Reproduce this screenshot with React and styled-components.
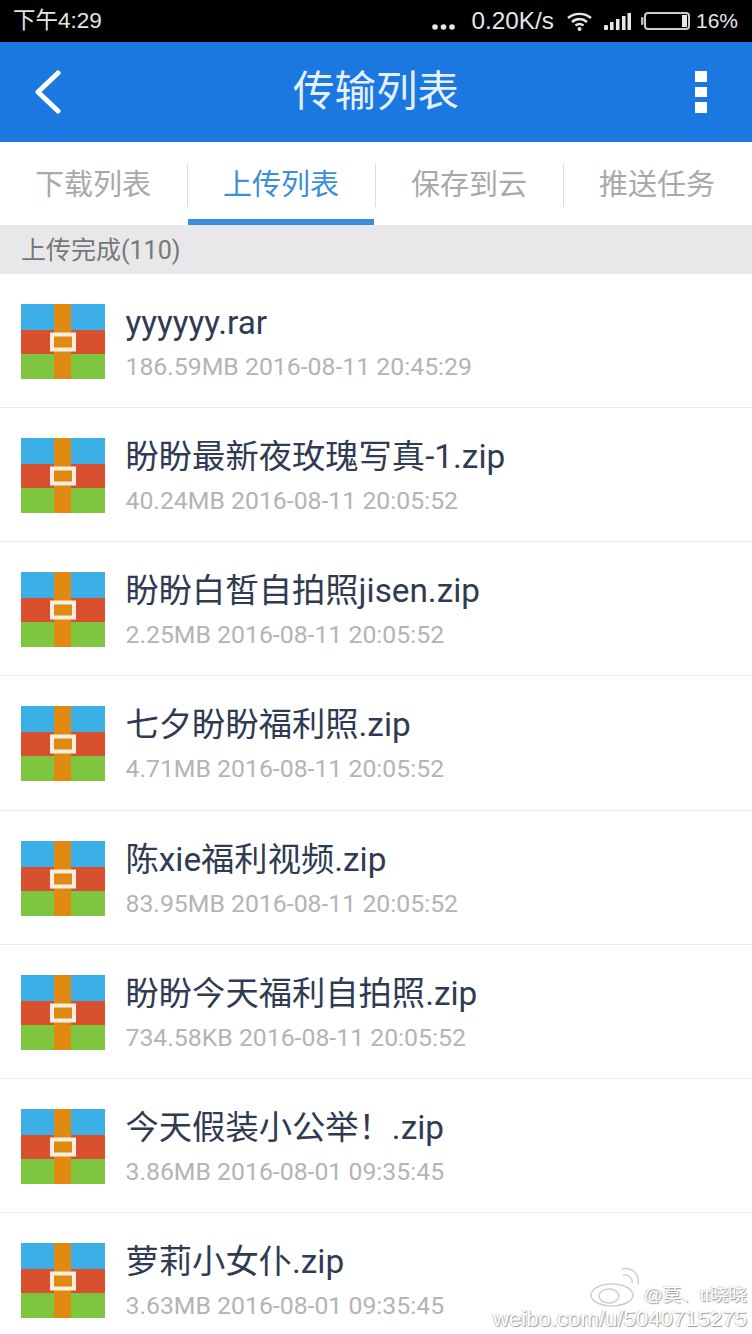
import React from 'react';
import styled, { createGlobalStyle } from 'styled-components';

const Global = createGlobalStyle`
  html, body { margin: 0; padding: 0; background: #fff; }
  * { box-sizing: border-box; }
`;

const FONT = `Roboto, "Noto Sans CJK SC", sans-serif`;

const Phone = styled.div`
  position: relative;
  width: 752px;
  height: 1334px;
  overflow: hidden;
  background: #fff;
  font-family: ${FONT};
`;

const StatusBar = styled.div`
  height: 42px;
  background: #000;
  color: #e6e6e6;
  display: flex;
  align-items: center;
  justify-content: space-between;
  padding: 0 14px 0 13px;
  font-family: "Liberation Sans", "Noto Sans CJK SC", sans-serif;
  font-size: 21px;
`;

const Clock = styled.span`
  font-size: 22.5px;
  line-height: 26px;
  margin-top: -1px;
`;

const StatusRight = styled.div`
  display: flex;
  align-items: center;
`;

const Speed = styled.span`
  margin: 0 13px 0 17px;
  font-size: 24.3px;
  line-height: 26px;
`;

const Percent = styled.span`
  line-height: 26px;
`;

const Header = styled.header`
  height: 100px;
  background: #1a78e0;
  display: grid;
  grid-template-columns: 1fr auto 1fr;
  align-items: center;
  padding: 0 45px;
  color: #e6f0fb;
`;

const BackButton = styled.div`
  display: flex;
  margin-left: -11px;
`;

const Title = styled.h1`
  margin: 0;
  font-size: 41.5px;
  font-weight: 400;
  line-height: 1;
`;

const HeaderEnd = styled.div`
  display: flex;
  justify-content: flex-end;
`;

const Tabs = styled.nav`
  height: 83px;
  display: flex;
  background: #fff;
`;

const Tab = styled.div`
  width: 188px;
  position: relative;
  display: flex;
  align-items: center;
  justify-content: center;
  padding: 0 2px 4px 0;
  font-size: 29px;
  color: ${p => (p.$active ? '#3b8fd8' : '#a9a9a9')};

  &::before {
    content: '';
    display: ${p => (p.$active ? 'block' : 'none')};
    position: absolute;
    left: 0;
    right: 2px;
    bottom: 0;
    height: 6px;
    background: #3b8fd8;
  }

  &:not(:last-child)::after {
    content: '';
    position: absolute;
    right: 0;
    top: 22px;
    height: 43px;
    width: 1px;
    background: #dcdcdc;
  }
`;

const SectionBar = styled.div`
  height: 49px;
  background: #e8e8ea;
  color: #777;
  font-size: 25px;
  display: flex;
  align-items: center;
  padding: 0 0 3px 21px;
`;

const Row = styled.div`
  height: 134.14px;
  display: flex;
  align-items: flex-start;
  padding: 30px 0 0 21px;
  border-bottom: 1px solid #ececec;
`;

const Info = styled.div`
  margin-left: 20.5px;
  display: flex;
  flex-direction: column;
`;

const Name = styled.div`
  font-size: 33.3px;
  line-height: 40px;
  margin-top: -1px;
  color: #2f3b52;
`;

const Meta = styled.div`
  font-size: 24.8px;
  line-height: 30px;
  margin-top: 9px;
  color: #b4b4b4;
`;

const Watermark = styled.div`
  position: absolute;
  right: 5px;
  bottom: 2px;
  display: flex;
  flex-direction: column;
  align-items: flex-end;
  color: #fff;
  font-family: "Liberation Sans", "Noto Sans CJK SC", sans-serif;
  text-shadow: 1px 1px 1px #9a9a9a, -1px 0 1px #ccc;
`;

const WatermarkTop = styled.div`
  display: flex;
  align-items: flex-end;
  font-size: 18.5px;
  line-height: 24px;
  margin-bottom: -1px;
`;

const WatermarkUrl = styled.div`
  font-size: 22.2px;
  line-height: 26px;
`;

const ZipIcon = () => (
  <svg width="84" height="75" viewBox="0 0 84 75" style={{ flex: 'none' }}>
    <rect width="84" height="26" fill="#3cb0e6" />
    <rect y="26" width="84" height="24" fill="#d8502e" />
    <rect y="50" width="84" height="25" fill="#7ec540" />
    <rect x="33" width="17" height="75" fill="#e08a12" />
    <rect x="31" y="30.500" width="22" height="15" fill="#e08a12" stroke="#f6efe2" strokeWidth="4" />
  </svg>
);

const Wifi = () => (
  <svg width="25" height="19" viewBox="0 0 25 19" fill="none" stroke="#e6e6e6" strokeWidth="2.400">
    <path d="M1 6 C7.500 0.500 17.500 0.500 24 6" />
    <path d="M5 10 C9.500 6 15.500 6 20 10" />
    <path d="M8.500 13.500 C11 11.500 14 11.500 16.500 13.500" />
    <circle cx="12.500" cy="17" r="2" fill="#e6e6e6" stroke="none" />
  </svg>
);

const Signal = () => (
  <svg width="27" height="17" viewBox="0 0 27 17" fill="#e6e6e6" style={{ margin: '0 10px 0 12px' }}>
    <rect x="0" y="12" width="4" height="5" rx="1" />
    <rect x="6" y="9" width="3.500" height="8" />
    <rect x="12" y="6" width="3.500" height="11" />
    <rect x="18" y="3" width="3.500" height="14" />
    <rect x="23.500" y="0" width="3.500" height="17" />
  </svg>
);

const Battery = () => (
  <svg width="49" height="18" viewBox="0 0 49 18" style={{ marginRight: 6 }}>
    <rect x="0" y="5" width="2.500" height="8" rx="1" fill="#bbb" />
    <rect x="4" y="1" width="44" height="16" rx="3" fill="none" stroke="#ccc" strokeWidth="2" />
    <rect x="41" y="3" width="5" height="12" fill="#e6e6e6" />
  </svg>
);

const Dots = () => (
  <svg width="23" height="6" viewBox="0 0 23 6" fill="#e6e6e6" style={{ marginTop: 12 }}>
    <circle cx="3" cy="3" r="2.800" />
    <circle cx="11.500" cy="3" r="2.800" />
    <circle cx="20" cy="3" r="2.800" />
  </svg>
);

const Back = () => (
  <svg width="28" height="44" viewBox="0 0 28 44" fill="none" stroke="#fff" strokeWidth="5" strokeLinecap="round" strokeLinejoin="round">
    <path d="M24 3 L4 22 L24 41" />
  </svg>
);

const More = () => (
  <svg width="12" height="42" viewBox="0 0 12 42" fill="#fff">
    <rect width="12" height="11" />
    <rect y="16" width="12" height="10" />
    <rect y="31" width="12" height="11" />
  </svg>
);

const WeiboMark = () => (
  <svg width="52" height="42" viewBox="0 0 52 42" fill="none" stroke="#d0d0d0" strokeWidth="1.500" style={{ marginRight: 2, marginBottom: -1 }}>
    <ellipse cx="22" cy="29" rx="21" ry="11" />
    <ellipse cx="19" cy="30" rx="10" ry="7" />
    <path d="M32 3 C42 1 50 8 48 18" />
    <path d="M33 9 C38 8 43 12 42 17" />
  </svg>
);

const files = [
  ['yyyyyy.rar', '186.59MB 2016-08-11 20:45:29'],
  ['盼盼最新夜玫瑰写真-1.zip', '40.24MB 2016-08-11 20:05:52'],
  ['盼盼白皙自拍照jisen.zip', '2.25MB 2016-08-11 20:05:52'],
  ['七夕盼盼福利照.zip', '4.71MB 2016-08-11 20:05:52'],
  ['陈xie福利视频.zip', '83.95MB 2016-08-11 20:05:52'],
  ['盼盼今天福利自拍照.zip', '734.58KB 2016-08-11 20:05:52'],
  ['今天假装小公举！.zip', '3.86MB 2016-08-01 09:35:45'],
  ['萝莉小女仆.zip', '3.63MB 2016-08-01 09:35:45'],
];

const tabs = ['下载列表', '上传列表', '保存到云', '推送任务'];

export default function App() {
  return (
    <Phone>
      <Global />
      <StatusBar>
        <Clock>下午4:29</Clock>
        <StatusRight>
          <Dots />
          <Speed>0.20K/s</Speed>
          <Wifi />
          <Signal />
          <Battery />
          <Percent>16%</Percent>
        </StatusRight>
      </StatusBar>
      <Header>
        <BackButton>
          <Back />
        </BackButton>
        <Title>传输列表</Title>
        <HeaderEnd>
          <More />
        </HeaderEnd>
      </Header>
      <Tabs>
        {tabs.map((t, i) => (
          <Tab key={t} $active={i === 1}>{t}</Tab>
        ))}
      </Tabs>
      <SectionBar>上传完成(110)</SectionBar>
      {files.map(([name, meta]) => (
        <Row key={name}>
          <ZipIcon />
          <Info>
            <Name>{name}</Name>
            <Meta>{meta}</Meta>
          </Info>
        </Row>
      ))}
      <Watermark>
        <WatermarkTop>
          <WeiboMark />
          <span>@莫、tt晓晓</span>
        </WatermarkTop>
        <WatermarkUrl>weibo.com/u/5040715275</WatermarkUrl>
      </Watermark>
    </Phone>
  );
}
